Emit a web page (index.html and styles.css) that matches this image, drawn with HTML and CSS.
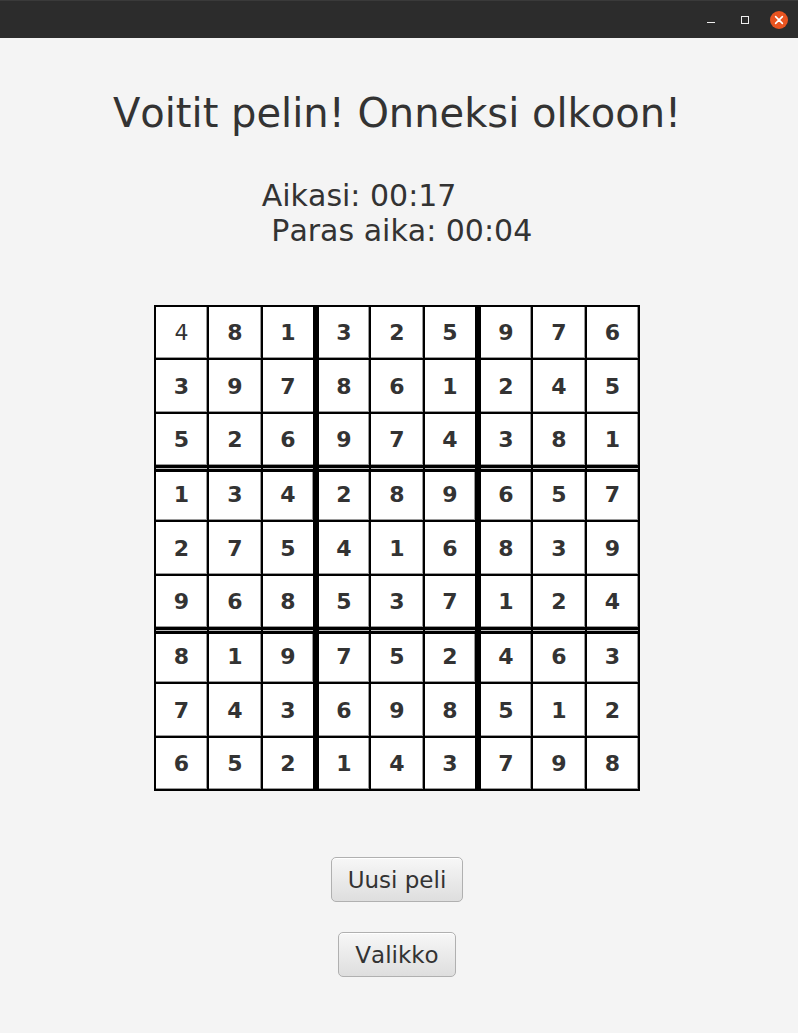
FILE: index.html
```html
<!DOCTYPE html>
<html lang="fi">
<head>
<meta charset="utf-8">
<title>Sudoku</title>
<link rel="stylesheet" href="styles.css">
</head>
<body>
<div class="titlebar">
  <div class="wm-buttons">
    <span class="wm-btn wm-min"><span class="min-line"></span></span>
    <span class="wm-btn wm-max"><span class="max-box"></span></span>
    <span class="wm-btn wm-close">
      <svg width="18" height="18" viewBox="0 0 18 18"><circle cx="9" cy="9" r="9" fill="#e95420"/><path d="M5.6 5.6 L12.4 12.4 M12.4 5.6 L5.6 12.4" stroke="#fff" stroke-width="1.6" stroke-linecap="round"/></svg>
    </span>
  </div>
</div>
<main class="page">
  <h1 class="title">Voitit pelin! Onneksi olkoon!</h1>
  <div class="times">Aikasi: 00:17
 Paras aika: 00:04</div>
  <div class="board">
    <div class="cell plain">4</div><div class="cell">8</div><div class="cell">1</div><div class="cell">3</div><div class="cell">2</div><div class="cell">5</div><div class="cell">9</div><div class="cell">7</div><div class="cell">6</div>
    <div class="cell">3</div><div class="cell">9</div><div class="cell">7</div><div class="cell">8</div><div class="cell">6</div><div class="cell">1</div><div class="cell">2</div><div class="cell">4</div><div class="cell">5</div>
    <div class="cell">5</div><div class="cell">2</div><div class="cell">6</div><div class="cell">9</div><div class="cell">7</div><div class="cell">4</div><div class="cell">3</div><div class="cell">8</div><div class="cell">1</div>
    <div class="cell">1</div><div class="cell">3</div><div class="cell">4</div><div class="cell">2</div><div class="cell">8</div><div class="cell">9</div><div class="cell">6</div><div class="cell">5</div><div class="cell">7</div>
    <div class="cell">2</div><div class="cell">7</div><div class="cell">5</div><div class="cell">4</div><div class="cell">1</div><div class="cell">6</div><div class="cell">8</div><div class="cell">3</div><div class="cell">9</div>
    <div class="cell">9</div><div class="cell">6</div><div class="cell">8</div><div class="cell">5</div><div class="cell">3</div><div class="cell">7</div><div class="cell">1</div><div class="cell">2</div><div class="cell">4</div>
    <div class="cell">8</div><div class="cell">1</div><div class="cell">9</div><div class="cell">7</div><div class="cell">5</div><div class="cell">2</div><div class="cell">4</div><div class="cell">6</div><div class="cell">3</div>
    <div class="cell">7</div><div class="cell">4</div><div class="cell">3</div><div class="cell">6</div><div class="cell">9</div><div class="cell">8</div><div class="cell">5</div><div class="cell">1</div><div class="cell">2</div>
    <div class="cell">6</div><div class="cell">5</div><div class="cell">2</div><div class="cell">1</div><div class="cell">4</div><div class="cell">3</div><div class="cell">7</div><div class="cell">9</div><div class="cell">8</div>
  </div>
  <div class="actions">
    <button class="btn">Uusi peli</button>
    <button class="btn">Valikko</button>
  </div>
</main>
</body>
</html>
```
FILE: styles.css
```css
html, body {
  margin: 0;
  padding: 0;
  background: #f4f4f4;
  font-family: "DejaVu Sans", sans-serif;
  font-kerning: none;
  color: #333333;
}

.titlebar {
  height: 38px;
  box-sizing: border-box;
  background: #2c2c2c;
  border-top: 1px solid #3a3a3a;
  display: flex;
  justify-content: flex-end;
  align-items: center;
}

.wm-buttons {
  display: flex;
  align-items: center;
  gap: 0;
  padding-right: 10px;
}

.wm-btn {
  width: 34px;
  height: 18px;
  display: flex;
  align-items: center;
  justify-content: center;
}

.wm-max { margin-right: 8px; }
.wm-close { width: 18px; }
.wm-close svg { display: block; }

.min-line {
  display: block;
  width: 8px;
  height: 1px;
  background: #eeeeee;
  margin-top: 6px;
}

.max-box {
  display: block;
  width: 6px;
  height: 6px;
  border: 1px solid #eeeeee;
}

.page {
  width: 794px;
  display: flex;
  flex-direction: column;
  align-items: center;
  padding-top: 52px;
}

.title {
  margin: 0;
  font-size: 40px;
  font-weight: normal;
  line-height: normal;
}

.times {
  margin-top: 42px;
  font-size: 30px;
  line-height: normal;
  white-space: pre;
  text-align: left;
}

.board {
  margin-top: 57px;
  display: grid;
  grid-template-columns: 53px repeat(7, 54px) 53px;
  grid-template-rows: 53px repeat(7, 54px) 53px;
  border: 1px solid #000;
  background: #000;
}

.cell {
  box-sizing: border-box;
  background: #fff;
  border: 1px solid #000;
  box-shadow: inset -1px -1px 0 #9a9a9a;
  display: flex;
  align-items: center;
  justify-content: center;
  font-size: 22px;
  font-weight: bold;
  color: #333;
}

.cell.plain { font-weight: normal; }

/* thick vertical separators */
.cell:nth-child(9n+3), .cell:nth-child(9n+6) {
  border-right-width: 3px;
  box-shadow: inset 0 -1px 0 #9a9a9a;
}
.cell:nth-child(9n+4), .cell:nth-child(9n+7) {
  border-left-width: 3px;
}

/* double horizontal separators */
.cell:nth-child(n+19):nth-child(-n+27),
.cell:nth-child(n+46):nth-child(-n+54) {
  border-bottom-width: 2px;
}
.cell:nth-child(n+28):nth-child(-n+36),
.cell:nth-child(n+55):nth-child(-n+63) {
  box-shadow: inset 0 1px 0 #bbbbbb, inset 0 4px 0 #000, inset -1px -1px 0 #9a9a9a;
}
.cell:nth-child(30), .cell:nth-child(33),
.cell:nth-child(57), .cell:nth-child(60) {
  box-shadow: inset 0 1px 0 #bbbbbb, inset 0 4px 0 #000, inset 0 -1px 0 #9a9a9a;
}

.actions {
  margin-top: 66px;
  display: flex;
  flex-direction: column;
  align-items: center;
  gap: 30px;
}

.btn {
  font-family: "DejaVu Sans", sans-serif;
  font-kerning: none;
  font-size: 23px;
  line-height: normal;
  color: #333;
  height: 45px;
  padding: 0 16px;
  border: 1px solid #b0b0b0;
  border-radius: 5px;
  background: linear-gradient(#f7f7f7, #dedede);
  box-shadow: inset 0 1px 0 #ffffff;
}
```
